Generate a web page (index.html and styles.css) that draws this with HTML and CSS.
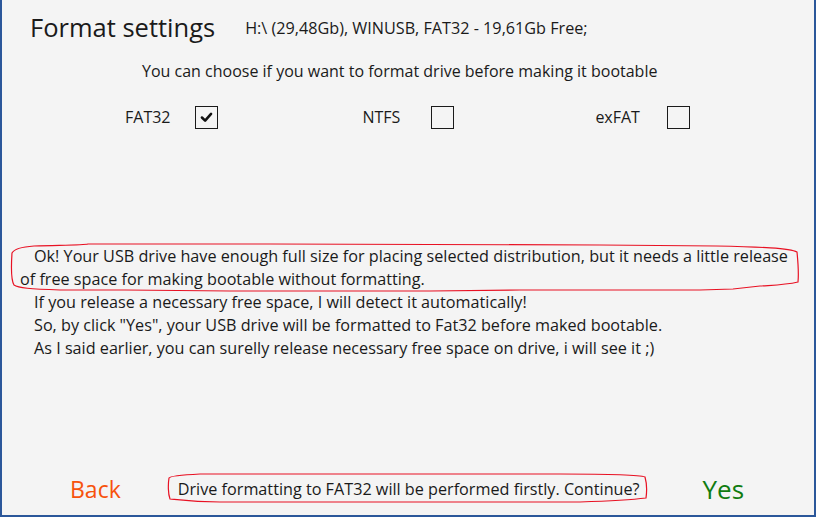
FILE: index.html
```html
<!DOCTYPE html>
<html lang="en">
<head>
  <meta charset="UTF-8">
  <title>Format settings</title>
  <link rel="stylesheet" href="styles.css">
</head>
<body>
  <div class="window">
    <div class="header">
      <h1>Format settings</h1>
      <span class="drive">H:\ (29,48Gb), WINUSB, FAT32 - 19,61Gb Free;</span>
    </div>
    <p class="hint">You can choose if you want to format drive before making it bootable</p>

    <div class="fs-row">
      <label class="fs fs-fat">FAT32
        <span class="box">
          <svg viewBox="0 0 23 23" width="21" height="21"><path d="M6.5 11.5 L10 15 L16.5 7.5" /></svg>
        </span>
      </label>
      <label class="fs fs-ntfs">NTFS <span class="box"></span></label>
      <label class="fs fs-exfat">exFAT <span class="box"></span></label>
    </div>

    <div class="message">
      <p>Ok! Your USB drive have enough full size for placing selected distribution, but it needs a little release of free space for making bootable without formatting.</p>
      <p>If you release a necessary free space, I will detect it automatically!</p>
      <p>So, by click "Yes", your USB drive will be formatted to Fat32 before maked bootable.</p>
      <p>As I said earlier, you can surelly release necessary free space on drive, i will see it ;)</p>
    </div>

    <div class="footer">
      <span class="btn back">Back</span>
      <span class="question">Drive formatting to FAT32 will be performed firstly. Continue?</span>
      <span class="btn yes">Yes</span>
    </div>

    <!-- red hand drawn marks -->
    <svg class="marks" viewBox="0 0 816 517" width="816" height="517">
      <path d="M12 253 C14 249 20 247 34 246 C70 245 85 245 88 244 L270 244 L600 245 L716 246 C760 247 790 248 797 252 C798 262 799 272 798 282 C785 285 776 285 760 286 L733 289 L700 290 L600 290 L520 290 L430 291 L300 291 L230 291 L125 290 L60 290 C30 289 18 288 14 285 C11 280 11 268 12 253 Z"/>
      <path d="M169 478 C170 476 180 475 200 474 L320 474 L560 474 C620 474 640 475 645 477 C647 484 647 491 646 498 C630 500 610 501 580 502 L380 502 L220 502 C195 502 180 500 170 499 C168 494 168 484 169 478 Z"/>
    </svg>
  </div>
</body>
</html>
```

FILE: styles.css
```css
body {
  margin: 0;
  font-family: 'Open Sans', 'Noto Sans', sans-serif;
  color: #1a1a1a;
}
.window {
  position: relative;
  box-sizing: border-box;
  width: 816px;
  height: 517px;
  background-color: #f4f4f4;
  border: 2px solid #2b579a;
  border-top: none;
  display: flex;
  flex-direction: column;
}
.header {
  display: flex;
  align-items: baseline;
  gap: 30px;
  padding: 10px 0 0 28px;
}
h1 {
  font-size: 25.5px;
  font-weight: normal;
  margin: 0;
}
.drive {
  font-size: 16.2px;
  position: relative;
  top: -3px;
}
.hint {
  font-size: 16px;
  margin: 16px 0 0 140px;
}
.fs-row {
  display: flex;
  margin-top: 23px;
  height: 24px;
}
.fs {
  display: flex;
  align-items: center;
  font-size: 16px;
}
.fs-fat { margin-left: 123px; gap: 25px; }
.fs-ntfs { margin-left: 144px; gap: 31px; }
.fs-exfat { margin-left: 141px; gap: 27px; }
.box {
  box-sizing: border-box;
  width: 23px;
  height: 23px;
  border: 1px solid #1a1a1a;
  display: flex;
  align-items: center;
  justify-content: center;
}
.box path {
  fill: none;
  stroke: #111;
  stroke-width: 2.8;
  stroke-linecap: round;
  stroke-linejoin: round;
}
.message {
  margin-top: 116px;
  padding: 0 20px 0 18px;
  font-size: 16.2px;
  line-height: 23px;
}
.message p {
  margin: 0;
  text-indent: 14px;
}
.footer {
  margin-top: auto;
  display: flex;
  align-items: center;
  height: 30px;
  margin-bottom: 11px;
}
.btn {
  font-size: 23px;
}
.back {
  color: #f7520c;
  margin-left: 68px;
}
.question {
  font-size: 16.2px;
  margin-left: 57px;
}
.yes {
  color: #107c10;
  margin-left: 63px;
  font-size: 26px;
}
.marks {
  position: absolute;
  left: -2px;
  top: 0;
  pointer-events: none;
}
.marks path {
  fill: none;
  stroke: #e81123;
  stroke-width: 1.2;
}
```
